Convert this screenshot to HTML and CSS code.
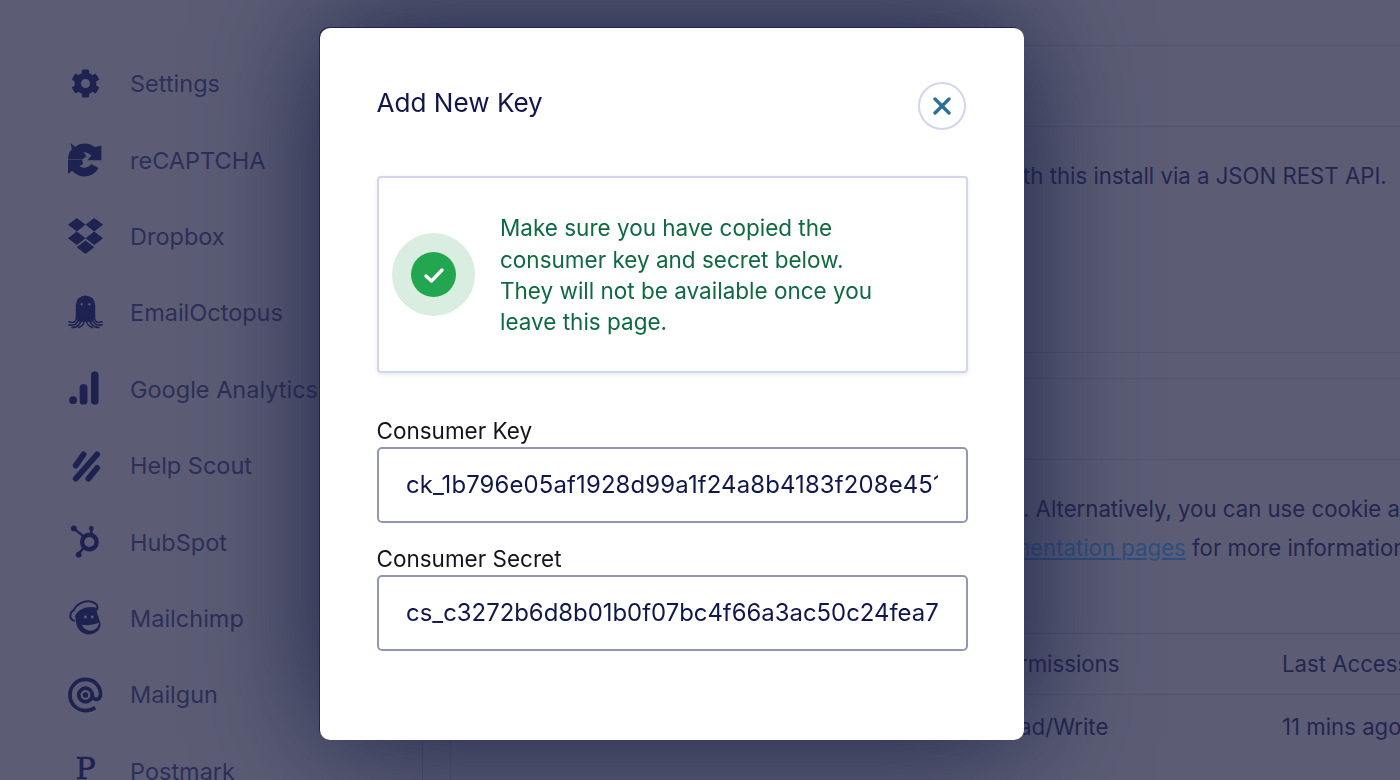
FILE: index.html
```html
<!DOCTYPE html>
<html lang="en">
<head>
<meta charset="utf-8">
<title>Add New Key</title>
<link rel="stylesheet" href="styles.css">
</head>
<body>
<div class="page">
  <nav class="sidebar">
    <a class="nav-item"><span class="nav-icon"><svg class="i-gear" viewBox="0 0 512 512"><path d="M487.4 315.7l-42.6-24.6c4.3-23.2 4.3-47 0-70.2l42.6-24.6c4.9-2.8 7.1-8.6 5.5-14-11.1-35.6-30-67.8-54.7-94.6-3.8-4.1-10-5.1-14.8-2.3L380.8 110c-17.9-15.4-38.5-27.3-60.8-35.1V25.8c0-5.6-3.9-10.5-9.4-11.7-36.7-8.2-74.3-7.8-109.2 0-5.5 1.2-9.4 6.1-9.4 11.7V75c-22.2 7.9-42.8 19.8-60.8 35.1L88.7 85.5c-4.9-2.8-11-1.9-14.8 2.3-24.7 26.7-43.6 58.9-54.7 94.6-1.7 5.4.6 11.2 5.5 14L67.3 221c-4.3 23.2-4.3 47 0 70.2l-42.6 24.6c-4.9 2.8-7.1 8.6-5.5 14 11.1 35.6 30 67.8 54.7 94.6 3.8 4.1 10 5.1 14.8 2.3l42.6-24.6c17.9 15.4 38.5 27.3 60.8 35.1v49.2c0 5.6 3.9 10.5 9.4 11.7 36.7 8.2 74.3 7.8 109.2 0 5.5-1.2 9.4-6.1 9.4-11.7v-49.2c22.2-7.9 42.8-19.8 60.8-35.1l42.6 24.6c4.9 2.8 11 1.9 14.8-2.3 24.7-26.7 43.6-58.9 54.7-94.6 1.5-5.5-.7-11.3-5.6-14.1zM256 336c-44.1 0-80-35.9-80-80s35.9-80 80-80 80 35.9 80 80-35.9 80-80 80z"/></svg></span>Settings</a>
    <a class="nav-item"><span class="nav-icon"><svg class="i-full" viewBox="0 0 36 36"><path d="M2.700 .7L7.500 4.300C13.500 0 21 0 27.500 4.700L34.300 3.300V18.300H19.700L24 13.700C22 11.200 19 9.800 16 10L19 14.500 14.500 17.500H0L.5 14C1 10 3 8 4 7z"/><path d="M0 18V32.300L4.300 29C12 38 26 36.500 31.300 26.300L24 22C21 26 15.500 27 11.700 24.500L15.500 22 14.500 18z"/></svg></span>reCAPTCHA</a>
    <a class="nav-item"><span class="nav-icon"><svg class="i-full" viewBox="0 32 528 448" preserveAspectRatio="none"><path d="M264.400 116.300l-132 84.300 132 84.300-132 84.300L0 284.100l132.300-84.300L0 116.300 132.300 32l132.100 84.300zM131.700 395.700l132-84.300 132 84.300-132 84.300-132-84.300zm132.700-111.600l132-84.300-132-83.600L395.700 32 528 116.300l-132.300 84.300L528 284.800l-132.300 84.300-131.300-85z"/></svg></span>Dropbox</a>
    <a class="nav-item"><span class="nav-icon"><svg class="i-full" viewBox="0 0 36 36"><path d="M8 22V10a10 10 0 0 1 20 0v12l-3 5h-14z"/><circle class="cut" cx="14" cy="9" r="1.200"/><circle class="cut" cx="22" cy="9" r="1.200"/><g class="line"><path d="M9 20c0 7-3 9-8 7"/><path d="M11 22c0 6-4 10-10 8"/><path d="M14 23c0 6-4 10-10 10"/><path d="M17 24c0 5-2 8-6 9"/><path d="M19 24c0 5 2 8 6 9"/><path d="M22 23c0 6 4 10 10 10"/><path d="M25 22c0 6 4 10 10 8"/><path d="M27 20c0 7 3 9 8 7"/></g></svg></span>EmailOctopus</a>
    <a class="nav-item"><span class="nav-icon"><svg class="i-full" viewBox="0 0 36 36"><circle cx="5.300" cy="29.500" r="4"/><rect x="12" y="13" width="8" height="21" rx="3.500"/><rect x="23.700" y="0" width="7.700" height="34" rx="3.500"/></svg></span>Google Analytics</a>
    <a class="nav-item"><span class="nav-icon"><svg class="i-full" viewBox="0 0 36 36"><g class="bar"><path d="M8 17.500L16 6"/><path d="M8 31L30 6"/><path d="M21 31L30 20"/></g></svg></span>Help Scout</a>
    <a class="nav-item"><span class="nav-icon"><svg class="i-full" viewBox="0 0 36 36"><circle class="ring" cx="22" cy="18" r="7.500"/><g class="spoke"><path d="M7 5L17 13"/><path d="M24 4V10"/><path d="M16.500 23.500L11 30"/></g><circle cx="6" cy="4" r="3"/><circle cx="24" cy="4" r="2.500"/><circle cx="11" cy="31" r="3"/></svg></span>HubSpot</a>
    <a class="nav-item"><span class="nav-icon"><svg class="i-full" viewBox="0 0 36 36"><path d="M8 21C7 12 13 7 24 8c4 0 6 2 6 5l3 9c2 6-3 12-11 13-8 0-13-6-14-14z"/><path class="thin" d="M7 21C0 19 2 12 6 10 8 4 16 0 23 1c6 1 8 4 7 8-7-3-18-1-22 8"/><circle class="cut" cx="18" cy="17" r="1.500"/><circle class="cut" cx="25" cy="17" r="1.500"/><path class="cut" d="M14 25c6 1 12 0 18-2-1 6-5 8-9 8s-7-2-9-6z"/></svg></span>Mailchimp</a>
    <a class="nav-item"><span class="nav-icon"><svg class="i-full" viewBox="0 0 36 36"><circle class="at" cx="18" cy="18" r="7"/><circle cx="18" cy="18" r="2.800"/><path class="at" d="M25 18c0 6 8 6 8.400 0C34 9 27 2 18 2 9 2 2 9 2 18s7 16 16 16c4 0 7-1 10-3"/></svg></span>Mailgun</a>
    <a class="nav-item"><span class="nav-icon nav-letter">P</span>Postmark</a>
  </nav>
  <main class="main">
    <section class="panel panel-first">
      <header class="panel-head"></header>
      <p class="panel-text intro">Access and manage your form submissions with this install via a JSON REST API.</p>
    </section>
    <section class="panel panel-second">
      <header class="panel-head"></header>
      <p class="panel-text auth">Requests use OAuth for authentication. Alternatively, you can use cookie authentication</p>
      <p class="panel-text auth2">See the <a class="link">REST API documentation pages</a> for more information on each route</p>
      <div class="table-row table-head"><span>Description</span><span>Permissions</span><span>Last Access</span></div>
      <div class="table-row table-last"><span>Zapier</span><span>Read/Write</span><span>11 mins ago</span></div>
    </section>
  </main>
</div>

<div class="modal" role="dialog" aria-label="Add New Key">
  <header class="modal-head">
    <h2 class="modal-title">Add New Key</h2>
    <button class="close" aria-label="Close"><svg viewBox="0 0 18 18"><path d="M2 2L16 16M16 2L2 16"/></svg></button>
  </header>
  <div class="notice">
    <span class="notice-halo"><span class="notice-dot"><svg viewBox="0 0 24 24"><path d="M4 13l5.500 5L20 7"/></svg></span></span>
    <p class="notice-text">Make sure you have copied the consumer key and secret below. They will not be available once you leave this page.</p>
  </div>
  <label class="field-label field-first" for="ck">Consumer Key</label>
  <input class="field field-key" id="ck" readonly value="ck_1b796e05af1928d99a1f24a8b4183f208e451c7d">
  <label class="field-label field-second" for="cs">Consumer Secret</label>
  <input class="field" id="cs" readonly value="cs_c3272b6d8b01b0f07bc4f66a3ac50c24fea7">
</div>
</body>
</html>
```
FILE: styles.css
```css
* { box-sizing: border-box; }
html, body { margin: 0; height: 100%; overflow: hidden; }
body { font-family: Inter, "Liberation Sans", sans-serif; background: #5c5d75; color: #232750; }

.page { display: flex; height: 780px; overflow: hidden; }

.sidebar { width: 423px; flex: none; margin-top: 45px; padding: .5px 0 0 68px; border-right: 1px solid #50516c; }
.nav-item { display: flex; align-items: center; height: 76.400px; gap: 27px; font-size: 23.500px; color: #2c3058; white-space: nowrap; }
.nav-icon { width: 35px; height: 36px; flex: none; display: flex; align-items: center; justify-content: center; }
.nav-icon svg { fill: #1d2250; }
.i-gear { width: 29px; height: 29px; }
.i-full { width: 35px; height: 36px; }
.cut { fill: #5c5d75; }
.line { fill: none; stroke: #1d2250; stroke-width: 1.600; stroke-linecap: round; }
.bar { fill: none; stroke: #1d2250; stroke-width: 6; stroke-linecap: round; }
.ring { fill: none; stroke: #1d2250; stroke-width: 4.500; }
.spoke { fill: none; stroke: #1d2250; stroke-width: 2.500; }
.thin { fill: none; stroke: #1d2250; stroke-width: 2; }
.at { fill: none; stroke: #1d2250; stroke-width: 3.800; }
.nav-letter { font-family: "DejaVu Serif", serif; font-size: 30px; color: #1d2250; -webkit-text-stroke: .6px #1d2250; padding-bottom: 6px; }

.main { flex: 1; padding: 45px 0 0 27px; min-width: 0; }
.panel { border: 1px solid #54556f; border-right: 0; font-size: 22.200px; white-space: nowrap; }
.panel-first { height: 308px; }
.panel-second { margin-top: 25px; height: 500px; }
.panel-head { height: 81px; border-bottom: 1px solid #54556f; }
.panel-text { margin: 0; }
.intro { margin: 35px 0 0 85px; }
.auth { margin: 35px 0 0 169px; }
.auth2 { margin: 12px 0 0 317px; }
.link { color: #2c4f80; text-decoration: underline; }
.table-row { display: grid; grid-template-columns: 541px 290px 1fr; height: 62px; align-items: center; padding-bottom: 1px; }
.table-head { border-top: 1px solid #50516c; border-bottom: 1px solid #54556f; margin-top: 72px; }
.table-last { height: 64px; }

.modal { position: fixed; left: 320px; top: 28px; width: 704px; height: 712px; background: #fff; border-radius: 10px; padding: 54px 56px 0 56.500px; box-shadow: -1px -1px 0 0 #1c2452, 0 0 120px rgba(22, 32, 68, .95); }
.modal-head { display: flex; justify-content: space-between; align-items: center; height: 48px; padding-right: 2px; }
.modal-title { margin: 0; font-size: 26.100px; font-weight: 400; color: #10174a; position: relative; bottom: 4px; }
.close { width: 48px; height: 48px; padding: 0; border: 2px solid #d2d6ea; border-radius: 50%; background: #fff; display: flex; align-items: center; justify-content: center; }
.close svg { width: 18px; height: 18px; fill: none; stroke: #2a7199; stroke-width: 3.400; stroke-linecap: round; }

.notice { margin-top: 46px; height: 197px; display: flex; align-items: center; padding-left: 13.500px; gap: 25px; border: 2px solid #d2d6ea; border-radius: 4px; box-shadow: 0 2px 4px rgba(60, 70, 130, .1); }
.notice-halo { width: 83px; height: 83px; flex: none; border-radius: 50%; background: #d9eee0; display: flex; align-items: center; justify-content: center; }
.notice-dot { width: 45px; height: 45px; border-radius: 50%; background: #23a650; display: flex; align-items: center; justify-content: center; }
.notice-dot svg { width: 24px; height: 24px; fill: none; stroke: #fff; stroke-width: 3.400; stroke-linecap: round; stroke-linejoin: round; }
.notice-text { margin: 1px 0 0; width: 385px; font-size: 22.500px; line-height: 31.300px; color: #0f6a41; }

.field-label { display: block; font-size: 22.500px; line-height: 28px; color: #14141c; }
.field-first { margin-top: 44px; }
.field-second { margin-top: 22.500px; }
.field { display: block; width: 100%; height: 75.500px; margin-top: 2px; padding: 0 28px 0 27.500px; border: 2px solid #9496b8; border-radius: 5px; background: #fff; font-family: Inter, "Liberation Sans", sans-serif; font-size: 23.900px; color: #10174a; outline: none; }
.field-key { letter-spacing: .15px; }
```
